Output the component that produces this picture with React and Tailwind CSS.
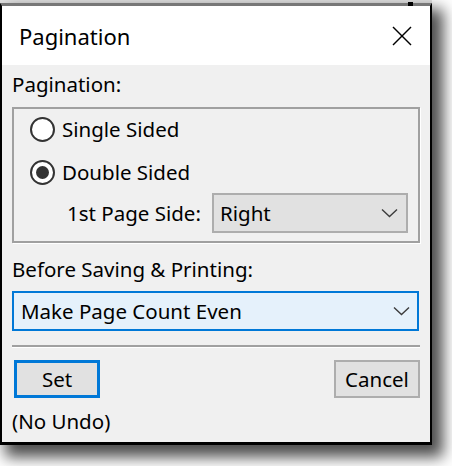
import React from "react";

const font = { fontFamily: '"Noto Sans", "Open Sans", sans-serif' };

const Chevron = () => (
  <svg width="17" height="10" viewBox="0 0 17 10" className="shrink-0">
    <polyline points="1,1.5 8.5,8.5 16,1.5" fill="none" stroke="#3c3c3c" strokeWidth="1.4" />
  </svg>
);

const Radio = ({ checked, label }) => (
  <div className="flex items-center h-[41px] pl-[16px]">
    <div className="w-[25px] h-[25px] rounded-full border-2 border-[#333] bg-white flex items-center justify-center">
      {checked && <div className="w-[13px] h-[13px] rounded-full bg-[#333]" />}
    </div>
    <span className="ml-[7px] text-[20.5px] leading-[27px] text-black">{label}</span>
  </div>
);

export default function App() {
  return (
    <div className="w-[452px] h-[466px] bg-white overflow-hidden" style={font}>
      <div className="h-[3px] w-[432px] bg-[#e4e4e4]" />
      <div className="relative w-[432px] h-[442px] flex flex-col border-t-[3px] border-t-[#777] border-x-2 border-x-black border-b-[3px] border-b-black shadow-[8px_9px_14px_3px_rgba(0,0,0,0.7)]">
        {/* little mark on the top edge */}
        <div className="absolute top-[-4px] left-[406px] w-[5px] h-[4px] bg-black" />

        {/* Title bar */}
        <div className="h-[59px] bg-white flex items-center justify-between pl-[17px] pr-[18px]">
          <span className="text-[22px] leading-[30px] text-black">Pagination</span>
          <svg width="20" height="20" viewBox="0 0 20 20">
            <line x1="1" y1="1" x2="19" y2="19" stroke="#000" strokeWidth="1.5" />
            <line x1="19" y1="1" x2="1" y2="19" stroke="#000" strokeWidth="1.5" />
          </svg>
        </div>

        {/* Body */}
        <div className="flex-1 bg-[#f0f0f0] px-[10px] pt-[6px] flex flex-col text-black">
          <div className="text-[20.5px] leading-[27px]">Pagination:</div>

          <div className="mt-[9px] h-[136px] border-2 border-[#a0a0a0] shadow-[1px_1px_0_#ffffff] flex flex-col">
            <Radio label="Single Sided" />
            <div className="mt-[2px]">
              <Radio checked label="Double Sided" />
            </div>
            <div className="flex items-center h-[40px]">
              <span className="pl-[53px] text-[20.5px] leading-[27px]">1st Page Side:</span>
              <div className="ml-auto mr-[10px] w-[196px] h-[40px] border-2 border-[#adadad] bg-[#e1e1e1] flex items-center justify-between pl-[6px] pr-[8px]">
                <span className="text-[20.5px] leading-[27px]">Right</span>
                <Chevron />
              </div>
            </div>
          </div>

          <div className="mt-[13px] text-[20.5px] leading-[27px]">Before Saving &amp; Printing:</div>

          <div className="mt-[8px] w-[407px] h-[40px] border-2 border-[#0078d7] bg-[#e5f1fb] flex items-center justify-between pl-[7px] pr-[7px]">
            <span className="text-[20.5px] leading-[27px]">Make Page Count Even</span>
            <Chevron />
          </div>

          <div className="mt-[14px] border-t-2 border-t-[#a0a0a0] border-b border-b-white" />

          <div className="mt-[12px] flex justify-between">
            <button className="ml-[2px] w-[86px] h-[38px] border-[3px] border-[#0078d7] bg-[#e1e1e1] text-[20.5px] leading-[27px] text-black">
              Set
            </button>
            <button className="w-[86px] h-[38px] border-2 border-[#adadad] bg-[#e1e1e1] text-[20.5px] leading-[27px] text-black">
              Cancel
            </button>
          </div>

          <div className="mt-[10px] text-[20.5px] leading-[27px]">(No Undo)</div>
        </div>
      </div>
    </div>
  );
}
